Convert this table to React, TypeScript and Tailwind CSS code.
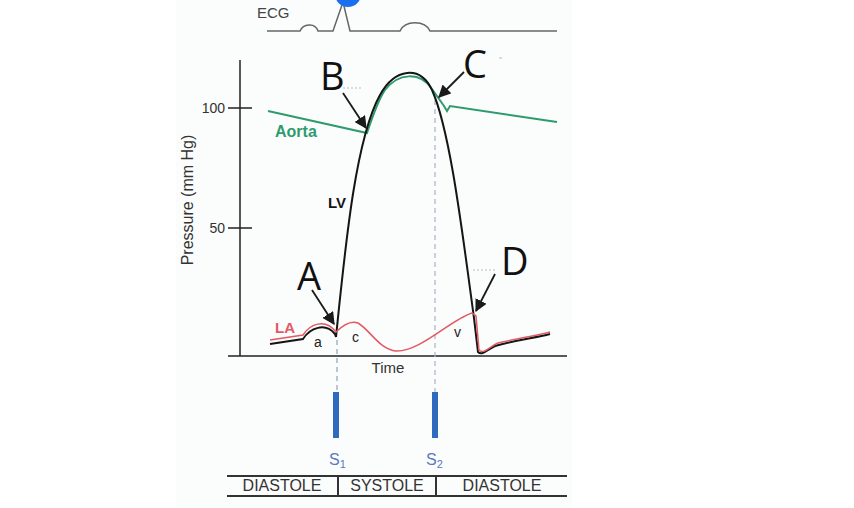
export default function App() {
  return (
    <div className="w-[854px] h-[508px] bg-white overflow-hidden">
      <div className="ml-[176px] w-[396px] h-[508px] bg-[#fbfcfc] flex flex-col font-['Liberation_Sans',Arial,sans-serif]">
        <svg width="396" height="470" viewBox="176 0 396 470" className="block">
          <defs>
            <marker id="arr" viewBox="0 0 10 10" refX="9" refY="5" markerWidth="7" markerHeight="7" orient="auto">
              <path d="M0 0 L10 5 L0 10 z" fill="#1a1a1a" />
            </marker>
          </defs>

          {/* ECG trace */}
          <text x="257" y="18" className="text-[15px] fill-[#444]">ECG</text>
          <path
            d="M267 31 L300 31 C303 24 315 22 318 31 L333 31 L343 2 L350 31 L400 31 C405 20 425 20 430 31 L557 31"
            fill="none"
            stroke="#666"
            strokeWidth="1.5"
          />
          <circle cx="348" cy="-6" r="13" fill="#1a6ff0" />

          {/* axes */}
          <line x1="240" y1="60" x2="240" y2="356" stroke="#222" strokeWidth="1.5" />
          <line x1="228" y1="356" x2="567" y2="356" stroke="#222" strokeWidth="1.5" />
          <line x1="228" y1="108" x2="252" y2="108" stroke="#222" strokeWidth="1.5" />
          <line x1="228" y1="228" x2="252" y2="228" stroke="#222" strokeWidth="1.5" />
          <text x="225" y="113" textAnchor="end" className="text-[14px] fill-[#333]">100</text>
          <text x="225" y="233" textAnchor="end" className="text-[14px] fill-[#333]">50</text>
          <text transform="translate(193 200) rotate(-90)" textAnchor="middle" className="text-[16px] fill-[#333]">
            Pressure (mm Hg)
          </text>
          <text x="388" y="373" textAnchor="middle" className="text-[15px] fill-[#333]">Time</text>

          {/* valve event lines */}
          <line x1="337" y1="340" x2="337" y2="392" stroke="#8fa3bf" strokeWidth="1.2" strokeDasharray="5 4" />
          <line x1="435" y1="100" x2="435" y2="392" stroke="#a9b3bf" strokeWidth="1.2" strokeDasharray="5 4" />

          {/* aorta */}
          <path
            d="M268 111 L367 133 C372 118 378 100 385 90 C398 73 420 71 432 89 L444 106 L447 111 L450 106 L557 122"
            fill="none"
            stroke="#2e9b6e"
            strokeWidth="2"
          />

          {/* left ventricle */}
          <path
            d="M270 344 L303 339 C310 328 325 322 335 334 L336 337 C345 250 355 140 380 95 C395 68 420 65 432 90 C450 130 462 230 474 318 L478 352 C482 356 487 350 495 346 C515 340 535 338 550 334"
            fill="none"
            stroke="#151515"
            strokeWidth="2"
          />

          {/* left atrium */}
          <path
            d="M270 340 L303 335 C310 324 325 318 336 332 C342 326 350 320 358 323 C370 330 380 350 396 351 C420 352 450 320 472 313 L476 316 L479 350 C484 355 490 346 498 343 C520 338 535 336 550 332"
            fill="none"
            stroke="#e25a63"
            strokeWidth="1.5"
          />

          <text x="275" y="137" className="text-[16px] font-bold fill-[#2e9b6e]">Aorta</text>
          <text x="328" y="208" className="text-[15px] font-bold fill-[#151515]">LV</text>
          <text x="275" y="333" className="text-[15px] font-bold fill-[#e25a63]">LA</text>
          <text x="314" y="347" className="text-[14px] fill-[#222]">a</text>
          <text x="352" y="342" className="text-[14px] fill-[#222]">c</text>
          <text x="454" y="337" className="text-[14px] fill-[#222]">v</text>

          {/* annotations */}
          <g className="text-[38px] fill-[#111] font-['Open_Sans','Noto_Sans',sans-serif]">
            <text x="320" y="90">B</text>
            <text x="463" y="78">C</text>
            <text x="297" y="290">A</text>
            <text x="501" y="275">D</text>
          </g>

          <line x1="343" y1="88" x2="363" y2="88" stroke="#bbb" strokeWidth="1" strokeDasharray="2 2" />
          <line x1="473" y1="270" x2="495" y2="270" stroke="#bbb" strokeWidth="1" strokeDasharray="2 2" />
          <line x1="499" y1="58" x2="502" y2="58" stroke="#bbb" strokeWidth="1" />

          <line x1="343" y1="93" x2="366" y2="128" stroke="#1a1a1a" strokeWidth="1.8" markerEnd="url(#arr)" />
          <line x1="464" y1="72" x2="439" y2="97" stroke="#1a1a1a" strokeWidth="1.8" markerEnd="url(#arr)" />
          <line x1="312" y1="290" x2="334" y2="324" stroke="#1a1a1a" strokeWidth="1.8" markerEnd="url(#arr)" />
          <line x1="495" y1="274" x2="476" y2="311" stroke="#1a1a1a" strokeWidth="1.8" markerEnd="url(#arr)" />

          {/* heart sounds */}
          <rect x="333" y="392" width="6" height="46" fill="#2e6bbf" />
          <rect x="432" y="392" width="6" height="46" fill="#2e6bbf" />
          <text x="329" y="465" className="text-[16px] fill-[#5a78c0]">
            S<tspan dy="3" className="text-[11px]">1</tspan>
          </text>
          <text x="426" y="465" className="text-[16px] fill-[#5a78c0]">
            S<tspan dy="3" className="text-[11px]">2</tspan>
          </text>
        </svg>

        <div className="mt-[5px] ml-[51px] w-[340px] h-[22px] flex border-y-2 border-[#333] text-[16px] leading-none text-[#333]">
          <div className="w-[110px] flex items-center justify-center">DIASTOLE</div>
          <div className="w-[98px] flex items-center justify-center border-l-2 border-[#333]">SYSTOLE</div>
          <div className="flex-1 flex items-center justify-center border-l-2 border-[#333]">DIASTOLE</div>
        </div>
      </div>
    </div>
  );
}
